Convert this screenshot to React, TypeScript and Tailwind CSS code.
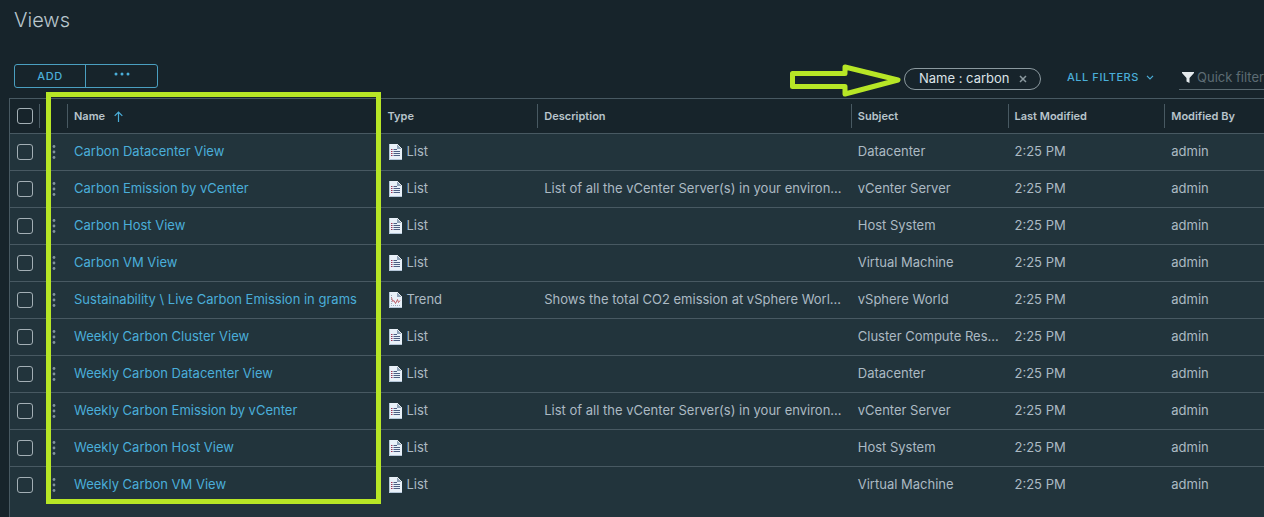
import React from "react";

type ViewType = "List" | "Trend";

interface View {
  name: string;
  type: ViewType;
  description: string;
  subject: string;
}

const views: View[] = [
  { name: "Carbon Datacenter View", type: "List", description: "", subject: "Datacenter" },
  { name: "Carbon Emission by vCenter", type: "List", description: "List of all the vCenter Server(s) in your environ…", subject: "vCenter Server" },
  { name: "Carbon Host View", type: "List", description: "", subject: "Host System" },
  { name: "Carbon VM View", type: "List", description: "", subject: "Virtual Machine" },
  { name: "Sustainability \\ Live Carbon Emission in grams", type: "Trend", description: "Shows the total CO2 emission at vSphere Worl…", subject: "vSphere World" },
  { name: "Weekly Carbon Cluster View", type: "List", description: "", subject: "Cluster Compute Res…" },
  { name: "Weekly Carbon Datacenter View", type: "List", description: "", subject: "Datacenter" },
  { name: "Weekly Carbon Emission by vCenter", type: "List", description: "List of all the vCenter Server(s) in your environ…", subject: "vCenter Server" },
  { name: "Weekly Carbon Host View", type: "List", description: "", subject: "Host System" },
  { name: "Weekly Carbon VM View", type: "List", description: "", subject: "Virtual Machine" },
];

function TypeIcon({ type }: { type: ViewType }) {
  return (
    <svg className="h-4 w-[13px] shrink-0" viewBox="0 0 13 16" aria-hidden="true">
      <path d="M0 0h8l5 5v11H0z" fill="#e9f1f9" />
      <path d="M0.5 0v15.5H13" fill="none" stroke="#b4c6d8" />
      <path d="M8 0v5h5z" fill="#8fa3b8" />
      <path d="M8 0l5 5" stroke="#ffffff" strokeWidth="0.8" />
      {type === "List" ? (
        <>
          <path d="M2 5.5h1.5M2 7.5h1.5M2 9.5h1.5M2 11.5h1.5" stroke="#9c3050" />
          <path d="M4.5 5.5H8M4.5 7.5H11M4.5 9.5H11M4.5 11.5H11" stroke="#4c5f82" />
        </>
      ) : (
        <>
          <path d="M2.5 3v10.5H11" fill="none" stroke="#8795a8" strokeWidth="0.8" strokeDasharray="1 1" />
          <path d="M2.5 5.5L3.7 9.5L5 8.5L6.5 11.5L8.5 7.5L9.5 10.5L11 8.5" fill="none" stroke="#b5424d" strokeWidth="0.8" />
        </>
      )}
    </svg>
  );
}

function Check({ label }: { label: string }) {
  return (
    <input
      type="checkbox"
      aria-label={label}
      className="ml-[7px] block size-4 appearance-none rounded-[3px] border border-[#a3afb5] checked:bg-[#4aaed9]"
    />
  );
}

function HeadCell({ children, divider = true }: { children?: React.ReactNode; divider?: boolean }) {
  return (
    <th scope="col" className="border-y border-[#485962] p-0 text-left font-semibold">
      <div className={`flex h-6 items-center pl-1.5 ${divider ? "border-r border-[#485962]" : ""}`}>{children}</div>
    </th>
  );
}

export default function App() {
  return (
    <div className="relative flex min-h-screen flex-col overflow-hidden bg-[#17242b] font-['Inter','Liberation_Sans',sans-serif] text-[13px] text-[#acbac3]">
      <h1 className="px-3.5 pt-1.5 text-[20px] leading-7 font-light text-[#b9c6cd]">Views</h1>

      <div className="flex h-16 items-end justify-between pl-3.5">
        <div className="mb-2.5 grid h-6 w-36 grid-cols-2 rounded-[3px] border border-[#4a9fc0] text-[11px] font-medium tracking-wider text-[#4aaed9]">
          <button type="button" className="border-r border-[#4a9fc0]">ADD</button>
          <button type="button" aria-label="More actions" className="flex items-center justify-center">
            <svg className="mb-1 h-1 w-4" viewBox="0 0 16 4" fill="currentColor" aria-hidden="true">
              <circle cx="2" cy="2" r="1.5" />
              <circle cx="8" cy="2" r="1.5" />
              <circle cx="14" cy="2" r="1.5" />
            </svg>
          </button>
        </div>

        <div className="flex items-start">
          <svg className="mr-0.5 h-[34px] w-28" viewBox="0 0 112 34" fill="none" aria-hidden="true">
            <path d="M2.5 9.5H55V3L108 16L55 30V22.5H2.5z" stroke="#b7e626" strokeWidth="5" strokeLinejoin="round" />
          </svg>
          <div className="mt-1 flex items-center">
            <div className="flex h-[22px] w-[137px] items-center justify-between rounded-full border border-[#8b999f] pr-[13px] pb-px pl-3.5 text-[#dce3e7]">
              <span>Name : carbon</span>
              <button type="button" aria-label="Remove filter" className="text-[#8b999f]">
                <svg className="size-2" viewBox="0 0 8 8" stroke="currentColor" strokeWidth="1.5" aria-hidden="true">
                  <path d="M1 1l6 6M7 1L1 7" />
                </svg>
              </button>
            </div>
            <button type="button" className="ml-[26px] flex h-5 w-[87px] items-center justify-between pb-1 text-[11px] font-medium tracking-wider whitespace-nowrap text-[#4aaed9]">
              ALL FILTERS
              <svg className="h-[5px] w-2" viewBox="0 0 8 5" fill="none" stroke="currentColor" strokeWidth="1.2" aria-hidden="true">
                <path d="M1 0.8l3 3 3-3" />
              </svg>
            </button>
            <div className="ml-[25px] flex h-[22px] w-[85px] items-center gap-[3px] overflow-hidden border-b border-[#596970] pb-0.5 pl-[3px]">
              <svg className="h-[11px] w-3 shrink-0" viewBox="0 0 12 11" fill="#e4eaed" aria-hidden="true">
                <path d="M0 0h12v1L7.5 6v5L4.5 9.5V6L0 1z" />
              </svg>
              <input
                type="text"
                aria-label="Quick filter"
                placeholder="Quick filter"
                className="w-24 shrink-0 bg-transparent outline-none placeholder:text-[#5d6c73]"
              />
            </div>
          </div>
        </div>
      </div>

      <div className="ml-[9px] flex-1 border-l border-[#485962] bg-[#22343c]">
        <table className="w-full table-fixed border-separate border-spacing-0">
          <colgroup>
            <col className="w-[30px]" />
            <col className="w-7" />
            <col className="w-[25%]" />
            <col className="w-[12.5%]" />
            <col className="w-[25%]" />
            <col className="w-[12.5%]" />
            <col className="w-[12.5%]" />
            <col />
          </colgroup>
          <thead className="bg-[#17242b] text-[11px] text-[#b9c5cc]">
            <tr className="h-9">
              <th scope="col" className="border-y border-[#485962] p-0">
                <div className="flex h-6 items-center border-r border-[#485962]">
                  <Check label="Select all views" />
                </div>
              </th>
              <HeadCell />
              <HeadCell divider={false}>
                Name
                <svg className="ml-[9px] h-[11px] w-[9px]" viewBox="0 0 9 11" fill="none" stroke="#4aaed9" strokeWidth="1.2" aria-hidden="true">
                  <path d="M4.5 11V1M0.7 4.8l3.8-3.8 3.8 3.8" />
                </svg>
              </HeadCell>
              <HeadCell>Type</HeadCell>
              <HeadCell>Description</HeadCell>
              <HeadCell>Subject</HeadCell>
              <HeadCell>Last Modified</HeadCell>
              <HeadCell divider={false}>Modified By</HeadCell>
            </tr>
          </thead>
          <tbody className="[&>tr:last-child>td]:border-transparent [&>tr>td]:border-b [&>tr>td]:border-[#485962]">
            {views.map((view) => (
              <tr key={view.name} className="h-[37px] whitespace-nowrap">
                <td className="p-0"><Check label={`Select ${view.name}`} /></td>
                <td className="p-0">
                  <button type="button" aria-label={`Actions for ${view.name}`} className="ml-3 block">
                    <svg className="h-4 w-1" viewBox="0 0 4 16" fill="#82929a" aria-hidden="true">
                      <circle cx="2" cy="2.5" r="1.4" />
                      <circle cx="2" cy="8" r="1.4" />
                      <circle cx="2" cy="13.5" r="1.4" />
                    </svg>
                  </button>
                </td>
                <td className="p-0 pl-1.5"><a href="#" className="text-[#4aaed9]">{view.name}</a></td>
                <td className="p-0 pl-[7px]">
                  <span className="flex items-center gap-[5px]">
                    <TypeIcon type={view.type} />
                    {view.type}
                  </span>
                </td>
                <td className="p-0 pl-1.5">{view.description}</td>
                <td className="p-0 pl-1.5">{view.subject}</td>
                <td className="p-0 pl-1.5">2:25 PM</td>
                <td className="p-0 pl-1.5">admin</td>
              </tr>
            ))}
          </tbody>
        </table>
      </div>

      <div className="pointer-events-none absolute top-[92px] left-[46px] h-[412px] w-[335px] border-[5px] border-[#b7e626]" />
    </div>
  );
}
